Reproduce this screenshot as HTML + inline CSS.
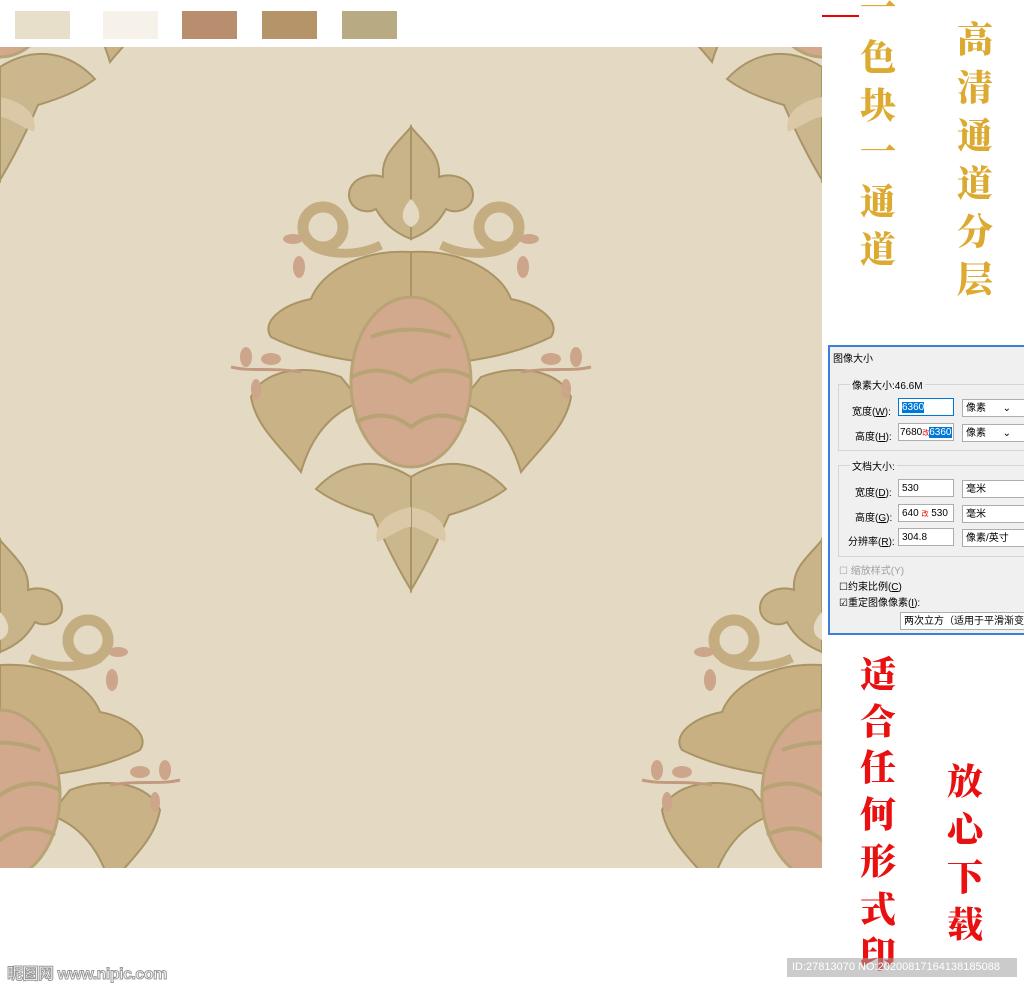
<!DOCTYPE html>
<html><head><meta charset="utf-8"><style>
*{margin:0;padding:0;box-sizing:border-box}
html,body{width:1024px;height:989px;overflow:hidden}
body{background:#fff;position:relative;font-family:"Liberation Sans","Noto Sans CJK SC",sans-serif}
.sw{position:absolute;top:11px;height:28px;width:55px}
.col{position:absolute;width:50px;text-align:center;font-family:"Noto Serif CJK SC","WenQuanYi Zen Hei",serif;font-weight:900;font-size:36px;line-height:1}
.col span{position:absolute;left:0;width:50px}
.dlg{position:absolute;left:828px;top:345px;width:200px;height:290px;border:2px solid #3c7fd8;background:#f0f0f0;font-size:10px;color:#000;overflow:hidden}
.dlg .t{position:absolute;white-space:nowrap}
.box{position:absolute;background:#fff;border:1px solid #adadad;height:18px;padding:2px 3px;font-size:10px;line-height:13px;white-space:nowrap;overflow:hidden}
.grp{position:absolute;border:1px solid #d5d5d5}
.sel{background:#0078d7;color:#fff}
</style></head><body>
<div class="sw" style="left:15px;background:#e8dfca"></div>
<div class="sw" style="left:103px;background:#f6f2ea"></div>
<div class="sw" style="left:182px;background:#b98e6e"></div>
<div class="sw" style="left:262px;background:#b49468"></div>
<div class="sw" style="left:342px;background:#b8aa82"></div>
<div style="position:absolute;left:822px;top:15px;width:37px;height:2px;background:#e00"></div>

<svg style="position:absolute;left:0;top:47px" width="822" height="821" viewBox="0 0 822 821">
<defs>
<clipPath id="c"><rect width="822" height="821"/></clipPath>
<g id="half" stroke="#a99466" stroke-width="2">
 <path d="M0 0 C15 18 30 28 28 50 C42 45 62 52 62 68 C62 82 45 88 35 82 C28 95 18 105 0 112Z" fill="#c9b489"/>
 <circle cx="88" cy="100" r="20" fill="none" stroke="#c4ad80" stroke-width="11"/>
 <path d="M30 118 C55 130 85 128 100 118" stroke="#c4ad80" stroke-width="9" fill="none"/>
 <ellipse cx="112" cy="140" rx="6" ry="11" fill="#cda58a" stroke="none"/>
 <ellipse cx="118" cy="112" rx="10" ry="5" fill="#cda58a" stroke="none"/>
 <path d="M0 125 C50 122 90 145 100 172 C130 178 150 195 140 210 C110 225 70 235 0 240Z" fill="#c8b083"/>
 <path d="M70 250 C110 235 150 245 160 270 C155 300 130 320 110 345 C100 310 80 285 50 275Z" fill="#c9b286"/>
 <path d="M110 245 C140 240 160 245 180 240" stroke="#c39a80" stroke-width="3" fill="none"/>
 <ellipse cx="140" cy="232" rx="10" ry="6" fill="#cda58a" stroke="none"/>
 <ellipse cx="165" cy="230" rx="6" ry="10" fill="#cda58a" stroke="none"/>
 <ellipse cx="155" cy="262" rx="5" ry="10" fill="#cda58a" stroke="none"/>
 <path d="M0 350 C35 328 70 335 95 362 C78 375 55 383 38 388 C25 418 14 440 0 463Z" fill="#cbb78e"/>
 <path d="M0 380 C25 385 38 398 34 415 C18 408 8 400 0 400Z" fill="#dac8a6" stroke="none"/>
</g>
<g id="orn">
 <use href="#half"/><use href="#half" transform="scale(-1,1)"/>
 <ellipse cx="0" cy="255" rx="60" ry="85" fill="#d2a98d" stroke="#b8a374" stroke-width="3"/>
 <path d="M-60 250 Q-30 235 0 255 Q30 235 60 250 M-55 295 Q-25 280 0 300 Q25 280 55 295 M-40 210 Q0 195 40 210" stroke="#b8a374" stroke-width="4" fill="none"/>
 <path d="M0 72 C-10 82 -12 95 0 100 C12 95 10 82 0 72Z" fill="#e4d9c2" stroke="none"/>
</g>
</defs>
<rect width="822" height="821" fill="#e4dac3"/>
<g clip-path="url(#c)">
<use href="#orn" transform="translate(411,80)"/>
<use href="#orn" transform="translate(0,-330)"/>
<use href="#orn" transform="translate(822,-330)"/>
<use href="#orn" transform="translate(0,493)"/>
<use href="#orn" transform="translate(822,493)"/>
</g>
</svg>

<div class="col" style="left:853px;top:0;color:#dcaa30">
<span style="top:-12px">一</span><span style="top:38px">色</span><span style="top:86px">块</span><span style="top:132px">一</span><span style="top:182px">通</span><span style="top:230px">道</span></div>
<div class="col" style="left:950px;top:0;color:#dcaa30">
<span style="top:20px">高</span><span style="top:68px">清</span><span style="top:116px">通</span><span style="top:164px">道</span><span style="top:212px">分</span><span style="top:260px">层</span></div>
<div class="col" style="left:853px;top:0;color:#e81010">
<span style="top:655px">适</span><span style="top:702px">合</span><span style="top:748px">任</span><span style="top:795px">何</span><span style="top:842px">形</span><span style="top:890px">式</span><span style="top:935px">印</span></div>
<div class="col" style="left:940px;top:0;color:#e81010">
<span style="top:762px">放</span><span style="top:810px">心</span><span style="top:858px">下</span><span style="top:905px">载</span></div>

<div class="dlg">
<div class="t" style="left:3px;top:3px">图像大小</div>
<div class="grp" style="left:8px;top:37px;width:200px;height:67px"></div>
<div class="t" style="left:20px;top:30px;background:#f0f0f0;padding:0 2px">像素大小:46.6M</div>
<div class="t" style="left:22px;top:56px">宽度(<u>W</u>):</div>
<div class="box" style="left:68px;top:51px;width:56px;border-color:#0078d7"><span class="sel">6360</span></div>
<div class="box" style="left:132px;top:52px;width:70px">像素 &nbsp;&nbsp;&nbsp;&nbsp;&nbsp;⌄</div>
<div class="t" style="left:25px;top:81px">高度(<u>H</u>):</div>
<div class="box" style="left:68px;top:76px;width:56px;padding:2px 1px">7680<span style="color:#e00;font-size:7px">改</span><span class="sel">6360</span></div>
<div class="box" style="left:132px;top:77px;width:70px">像素 &nbsp;&nbsp;&nbsp;&nbsp;&nbsp;⌄</div>
<div class="grp" style="left:8px;top:118px;width:200px;height:92px"></div>
<div class="t" style="left:20px;top:111px;background:#f0f0f0;padding:0 2px">文档大小:</div>
<div class="t" style="left:25px;top:137px">宽度(<u>D</u>):</div>
<div class="box" style="left:68px;top:132px;width:56px">530</div>
<div class="box" style="left:132px;top:133px;width:70px">毫米</div>
<div class="t" style="left:25px;top:162px">高度(<u>G</u>):</div>
<div class="box" style="left:68px;top:157px;width:56px">640 <span style="color:#e00;font-size:7px">改</span> 530</div>
<div class="box" style="left:132px;top:158px;width:70px">毫米</div>
<div class="t" style="left:18px;top:186px">分辨率(<u>R</u>):</div>
<div class="box" style="left:68px;top:181px;width:56px">304.8</div>
<div class="box" style="left:132px;top:182px;width:70px">像素/英寸</div>
<div class="t" style="left:9px;top:215px;color:#a0a0a0">☐ 缩放样式(Y)</div>
<div class="t" style="left:9px;top:231px">☐约束比例(<u>C</u>)</div>
<div class="t" style="left:9px;top:247px">☑重定图像像素(<u>I</u>):</div>
<div class="box" style="left:70px;top:265px;width:135px">两次立方（适用于平滑渐变</div>
</div>

<div style="position:absolute;left:7px;top:960px;font-size:16px;color:#fff;font-weight:bold;-webkit-text-stroke:1px #999;letter-spacing:-0.5px">昵图网 www.nipic.com</div>
<div style="position:absolute;left:787px;top:958px;width:230px;height:19px;background:rgba(160,160,160,0.55);color:#fff;font-size:11px;line-height:19px;padding-left:5px;white-space:nowrap;overflow:hidden">ID:27813070 NO:20200817164138185088</div>
</body></html>
